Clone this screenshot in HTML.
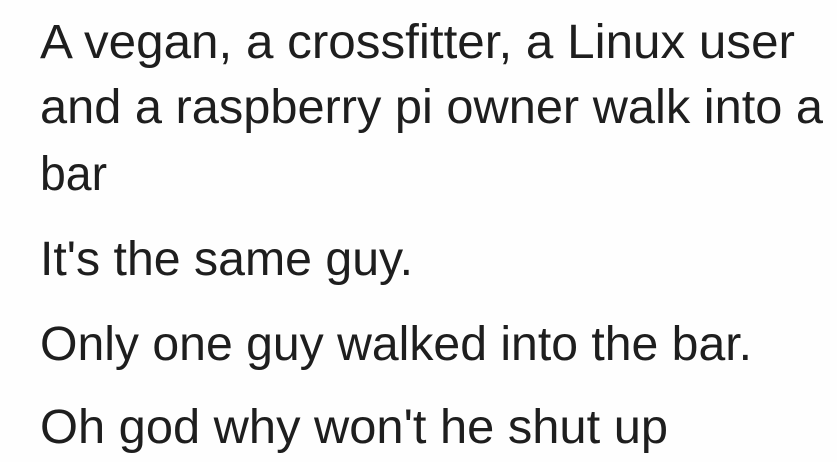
<!DOCTYPE html>
<html><head><style>html,body{margin:0;padding:0;background:#fff;width:837px;height:462px;overflow:hidden}</style></head>
<body>
<svg width="837" height="462" xmlns="http://www.w3.org/2000/svg" style="display:block">
<rect width="837" height="462" fill="#fefefe"/>
<g font-family="Liberation Sans, sans-serif" font-size="48" fill="#1e1e1e">
<text x="40" y="58" textLength="755" lengthAdjust="spacingAndGlyphs">A vegan, a crossfitter, a Linux user</text>
<text x="40" y="123" textLength="783" lengthAdjust="spacingAndGlyphs">and a raspberry pi owner walk into a</text>
<text x="40" y="190" textLength="67" lengthAdjust="spacingAndGlyphs">bar</text>
<text x="40" y="275" textLength="373" lengthAdjust="spacingAndGlyphs">It's the same guy.</text>
<text x="40" y="360" textLength="712" lengthAdjust="spacingAndGlyphs">Only one guy walked into the bar.</text>
<text x="40" y="443" textLength="628" lengthAdjust="spacingAndGlyphs">Oh god why won't he shut up</text>
</g>
</svg>
</body></html>
